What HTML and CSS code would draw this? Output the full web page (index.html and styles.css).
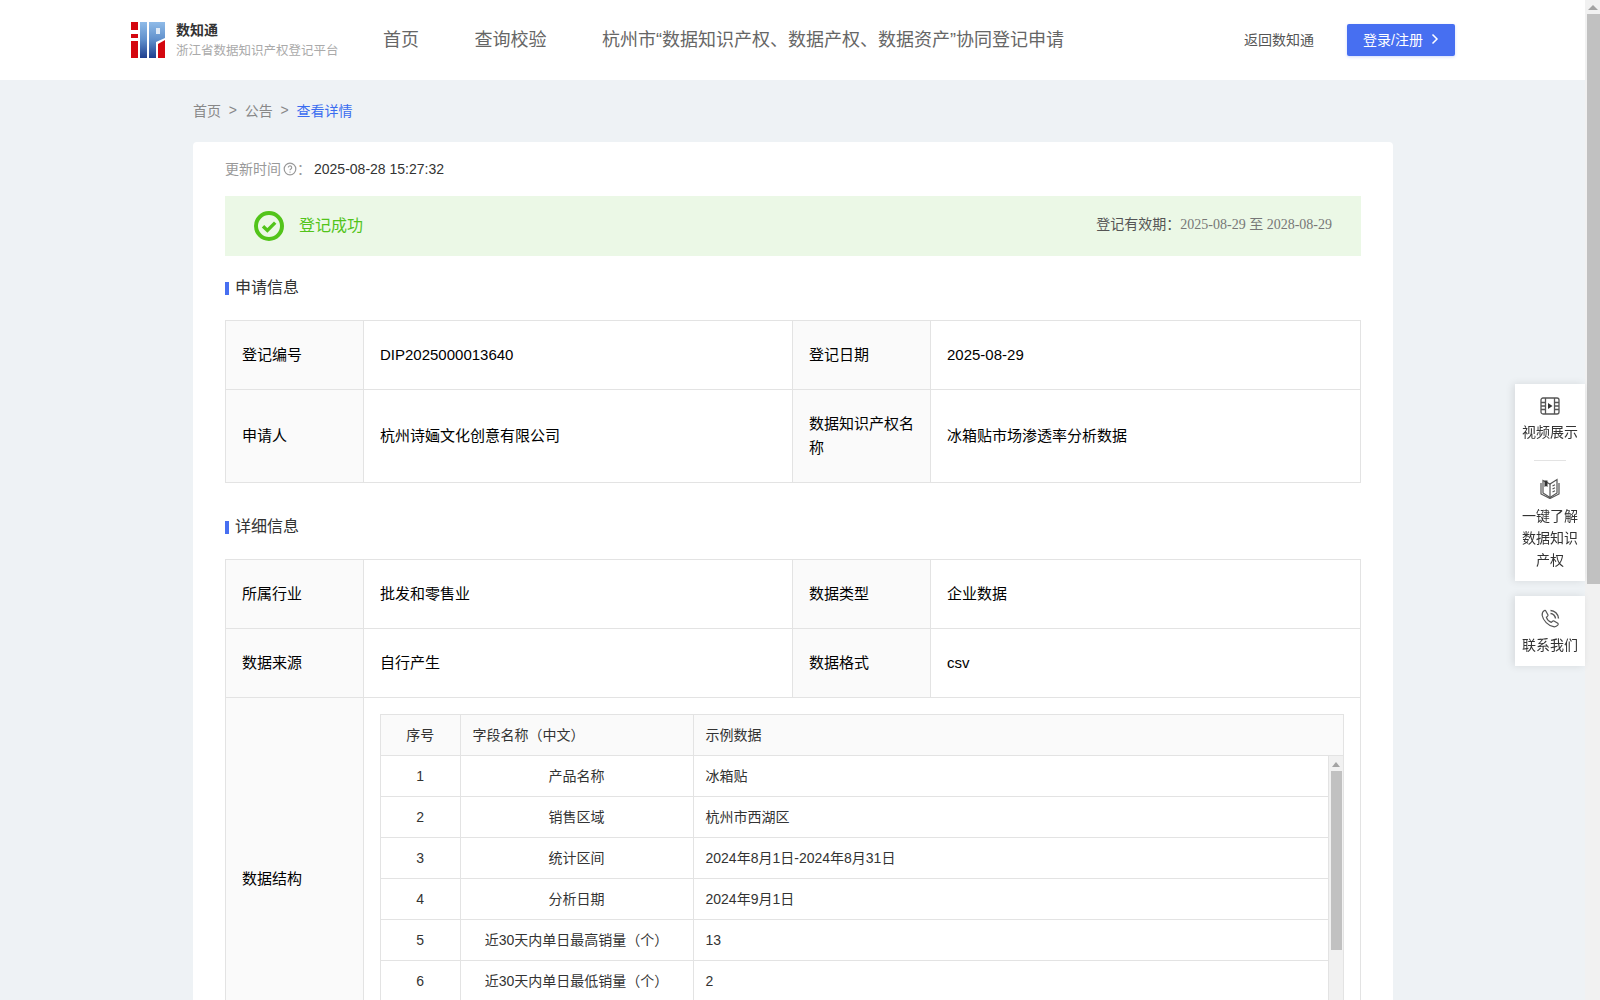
FILE: index.html
```html
<!DOCTYPE html>
<html lang="zh-CN">
<head>
    <meta charset="UTF-8">
    <title>数知通 - 查看详情</title>
    <link rel="stylesheet" href="styles.css">
</head>
<body>
<div class="page">
    <header class="header">
        <div class="brand">
            <svg class="logo" width="34" height="36" viewBox="0 0 34 36">
                <defs>
                    <linearGradient id="logoBlue" x1="0" y1="0" x2="0" y2="1">
                        <stop offset="0" stop-color="#8fbbe8"/>
                        <stop offset="0.5" stop-color="#5f8fcb"/>
                        <stop offset="1" stop-color="#1f3f8f"/>
                    </linearGradient>
                </defs>
                <rect x="0" y="0" width="7" height="8" fill="#d4070f"/>
                <rect x="0" y="12" width="7" height="4" fill="#d4070f"/>
                <rect x="0" y="19" width="7" height="17" fill="#d4070f"/>
                <rect x="9" y="0" width="7" height="36" fill="url(#logoBlue)"/>
                <path d="M18 0H34V16L25 20V36H18Z" fill="url(#logoBlue)"/>
                <rect x="25" y="6" width="4" height="6" fill="#dfeaf7"/>
                <path d="M27 22L34 18V36H27Z" fill="#d4070f"/>
            </svg>
            <div class="brand-text">
                <div class="brand-name">数知通</div>
                <div class="brand-sub">浙江省数据知识产权登记平台</div>
            </div>
        </div>
        <nav class="nav">
            <a>首页</a>
            <a>查询校验</a>
            <a>杭州市“数据知识产权、数据产权、数据资产”协同登记申请</a>
        </nav>
        <div class="header-right">
            <a class="back-link">返回数知通</a>
            <button class="login-btn">登录/注册
                <svg width="8" height="12" viewBox="0 0 8 12"><path d="M1.5 1.5L6 6L1.5 10.5" fill="none" stroke="#fff" stroke-width="1.5"/></svg>
            </button>
        </div>
    </header>

    <main class="content">
        <div class="breadcrumb">
            <span>首页</span><i>&gt;</i><span>公告</span><i>&gt;</i><span class="current">查看详情</span>
        </div>

        <section class="card">
            <div class="update-time">
                <span class="update-label">更新时间</span>
                <svg width="14" height="14" viewBox="0 0 14 14" class="help"><circle cx="7" cy="7" r="5.8" fill="none" stroke="#999" stroke-width="1.2"/><path d="M5.3 5.6a1.7 1.7 0 1 1 2.6 1.4c-.6.4-.9.7-.9 1.3" fill="none" stroke="#999" stroke-width="1.1"/><circle cx="7" cy="10.1" r=".7" fill="#999"/></svg>
                <span class="update-label">：</span>
                <span class="update-value">2025-08-28 15:27:32</span>
            </div>

            <div class="status-bar">
                <div class="status-left">
                    <svg width="30" height="30" viewBox="0 0 30 30"><circle cx="15" cy="15" r="13" fill="none" stroke="#52c41a" stroke-width="4"/><path d="M9 15.2L13.4 19.4L21.2 11.6" fill="none" stroke="#52c41a" stroke-width="3.4"/></svg>
                    <span>登记成功</span>
                </div>
                <div class="status-right">登记有效期：<span class="dates">2025-08-29 至 2028-08-29</span></div>
            </div>

            <h3 class="section-title">申请信息</h3>
            <table class="info-table">
                <colgroup><col class="col-label"><col class="col-value"><col class="col-label"><col></colgroup>
                <tr>
                    <th>登记编号</th><td>DIP2025000013640</td>
                    <th>登记日期</th><td>2025-08-29</td>
                </tr>
                <tr class="tall">
                    <th>申请人</th><td>杭州诗婳文化创意有限公司</td>
                    <th>数据知识产权名称</th><td>冰箱贴市场渗透率分析数据</td>
                </tr>
            </table>

            <h3 class="section-title second">详细信息</h3>
            <table class="info-table">
                <colgroup><col class="col-label"><col class="col-value"><col class="col-label"><col></colgroup>
                <tr>
                    <th>所属行业</th><td>批发和零售业</td>
                    <th>数据类型</th><td>企业数据</td>
                </tr>
                <tr>
                    <th>数据来源</th><td>自行产生</td>
                    <th>数据格式</th><td>csv</td>
                </tr>
                <tr>
                    <th>数据结构</th>
                    <td colspan="3" class="structure-cell">
                        <div class="structure">
                            <table class="structure-table">
                                <colgroup><col class="col-no"><col class="col-field"><col></colgroup>
                                <tr class="head"><td>序号</td><td class="left">字段名称（中文）</td><td class="left">示例数据</td></tr>
                            </table>
                            <div class="structure-body">
                                <table class="structure-table">
                                    <colgroup><col class="col-no"><col class="col-field"><col></colgroup>
                                    <tr><td>1</td><td>产品名称</td><td class="left">冰箱贴</td></tr>
                                    <tr><td>2</td><td>销售区域</td><td class="left">杭州市西湖区</td></tr>
                                    <tr><td>3</td><td>统计区间</td><td class="left">2024年8月1日-2024年8月31日</td></tr>
                                    <tr><td>4</td><td>分析日期</td><td class="left">2024年9月1日</td></tr>
                                    <tr><td>5</td><td>近30天内单日最高销量（个）</td><td class="left">13</td></tr>
                                    <tr><td>6</td><td>近30天内单日最低销量（个）</td><td class="left">2</td></tr>
                                </table>
                                <div class="inner-scroll">
                                    <div class="arrow-up"></div>
                                    <div class="inner-thumb"></div>
                                </div>
                            </div>
                        </div>
                    </td>
                </tr>
            </table>
        </section>
    </main>

    <aside class="side-tools">
        <div class="tool-card">
            <div class="tool">
                <svg width="20" height="18" viewBox="0 0 20 18" fill="none" stroke="#555" stroke-width="1.3"><rect x="1" y="1" width="18" height="16" rx="2"/><path d="M5.5 1V17M14.5 1V17M1 5.5H5.5M1 9H5.5M1 12.5H5.5M14.5 5.5H19M14.5 9H19M14.5 12.5H19"/><path d="M8 6L12.5 9L8 12Z" fill="#333" stroke="none"/></svg>
                <span>视频展示</span>
            </div>
            <div class="tool-line"></div>
            <div class="tool">
                <svg width="20" height="21" viewBox="0 0 20 21" fill="none" stroke="#555" stroke-width="1.2"><path d="M3 2.5L10 6L17 1.5V15L10 19.5L3 15Z"/><path d="M1 5V16L10 20.5L19 16V5"/><path d="M10 6V19.5"/><path d="M12.5 8L15 6.8M12.5 11L15 9.8M12.5 14L15 12.8"/><path d="M4.5 2.5H7.5V9L6 8L4.5 9Z" fill="#333" stroke="none"/></svg>
                <span>一键了解<br>数据知识<br>产权</span>
            </div>
        </div>
        <div class="tool-card">
            <div class="tool">
                <svg width="19" height="19" viewBox="0 0 19 19" fill="none" stroke="#555" stroke-width="1.2"><path d="M4.5 1.5L7 6C7.2 6.6 6.9 7 6.4 7.4L5.4 8.3C6 10.3 8 12.5 10.3 13.4L11.5 12.3C12 11.9 12.5 11.8 13 12.1L16.8 14.3C17.4 14.8 17.3 15.6 16.8 16.2C15.7 17.4 14.2 18 12.6 17.7C7 16.7 2.2 11.6 1.2 6.5C.9 4.6 2 2.4 3.4 1.5C3.8 1.2 4.2 1.2 4.5 1.5Z"/><path d="M9.5 1.5C13.5 1.5 17.3 5 17.5 9.5" stroke-width="1.4"/><path d="M9.5 4.5C12 4.5 14.3 6.8 14.5 9.5" stroke-width="1.4"/></svg>
                <span>联系我们</span>
            </div>
        </div>
    </aside>
</div>
<div class="page-scroll">
    <div class="page-arrow"></div>
    <div class="page-thumb"></div>
</div>
</body>
</html>
```

FILE: styles.css
```css
* {
    box-sizing: border-box;
}

html, body {
    height: 100%;
    margin: 0;
    overflow: hidden;
}

body {
    display: flex;
    font-family: "Liberation Sans", "Noto Sans CJK SC", sans-serif;
    font-size: 14px;
    color: #333;
    background-color: #eef2f5;
}

.page {
    flex: 1;
    min-width: 0;
    height: 100vh;
    overflow: hidden;
}

/* header */
.header {
    display: flex;
    align-items: center;
    height: 80px;
    padding: 0 130px 0 131px;
    background-color: #fff;
}

.brand {
    display: flex;
    align-items: center;
    gap: 11px;
    width: 252px;
}

.brand-name {
    font-size: 14px;
    font-weight: bold;
    line-height: 18px;
    color: #333;
}

.brand-sub {
    margin-top: 3px;
    font-size: 12.5px;
    line-height: 18px;
    white-space: nowrap;
    color: #aaa;
}

.nav {
    display: flex;
    gap: 55.5px;
    padding-bottom: 4px;
    font-size: 18px;
    color: #666;
}

.header-right {
    display: flex;
    align-items: center;
    gap: 33px;
    margin-left: auto;
}

.back-link {
    padding-bottom: 3px;
    color: #555;
}

.login-btn {
    display: flex;
    align-items: center;
    gap: 8px;
    width: 108px;
    height: 32px;
    padding: 0 0 3px 16px;
    border: 0;
    border-radius: 2px;
    font: inherit;
    color: #fff;
    background-color: #476ff1;
    box-shadow: 0 1px 3px rgba(71, 111, 241, 0.25);
}

/* content */
.content {
    width: 1200px;
    margin-left: 193px;
}

.breadcrumb {
    display: flex;
    align-items: center;
    height: 59px;
    margin-bottom: 3px;
    color: #888;
}

.breadcrumb i {
    margin: 0 7.8px;
    font-style: normal;
}

.current {
    color: #3a6df0;
}

.card {
    padding: 16px 32px;
    border-radius: 4px;
    background-color: #fff;
}

.update-time {
    display: flex;
    align-items: center;
    height: 21px;
}

.update-label {
    margin-bottom: 2px;
    color: #999;
}

.help {
    margin-left: 2px;
}

.update-value {
    margin-left: 3px;
    color: #333;
}

.status-bar {
    display: flex;
    align-items: center;
    justify-content: space-between;
    height: 60px;
    margin-top: 17px;
    padding: 0 29px;
    background-color: #ebf8e6;
}

.status-left {
    display: flex;
    align-items: center;
    gap: 15px;
    font-size: 16px;
    color: #52c41a;
}

.status-left span {
    margin-bottom: 4px;
}

.status-right {
    margin-bottom: 6px;
    color: #555;
}

.dates {
    font-family: "Liberation Serif", "Noto Sans CJK SC", serif;
    font-size: 14px;
    color: #777;
}

.section-title {
    position: relative;
    height: 22px;
    margin: 21px 0 21px;
    padding-left: 10px;
    font-size: 16px;
    font-weight: normal;
    line-height: 22px;
    color: #333;
}

.section-title::before {
    content: "";
    position: absolute;
    left: 0;
    top: 5px;
    width: 4px;
    height: 13px;
    background-color: #476ff1;
}

.section-title.second {
    margin-top: 33px;
}

/* tables */
.info-table {
    width: 100%;
    border-collapse: collapse;
    table-layout: fixed;
    font-size: 15px;
    color: #000;
}

.col-label {
    width: 138px;
}

.col-value {
    width: 429px;
}

.info-table th,
.info-table td {
    height: 69px;
    padding: 0 16px;
    border: 1px solid #e3e3e3;
    font-weight: normal;
    line-height: 24px;
    text-align: left;
}

.info-table th {
    background-color: #fafafa;
}

.info-table .tall th,
.info-table .tall td {
    height: 93px;
}

.info-table .structure-cell {
    padding: 16px;
    vertical-align: top;
}

.structure {
    border: 1px solid #e3e3e3;
    border-bottom: 0;
}

.structure-table {
    width: 100%;
    border-collapse: collapse;
    table-layout: fixed;
    font-size: 14px;
    color: #333;
}

.col-no {
    width: 79px;
}

.col-field {
    width: 233px;
}

.info-table .structure-table td {
    height: 41px;
    padding: 0 12px;
    border: 0;
    border-right: 1px solid #e3e3e3;
    border-bottom: 1px solid #e3e3e3;
    text-align: center;
}

.info-table .structure-table td:last-child {
    border-right: 0;
}

.info-table .structure-table td.left {
    text-align: left;
}

.info-table .structure-table .head td {
    height: 40px;
    background-color: #fafafa;
}

.structure-body {
    display: flex;
    align-items: flex-start;
    height: 288px;
    overflow: hidden;
}

.structure-body .structure-table {
    flex: 1;
    min-width: 0;
}

.inner-scroll {
    flex: none;
    align-self: stretch;
    width: 15px;
    border-left: 1px solid #e3e3e3;
    background-color: #f1f1f1;
}

.arrow-up {
    width: 0;
    margin: 6px auto 4px;
    border: 4px solid transparent;
    border-top: 0;
    border-bottom: 5px solid #a3a3a3;
}

.inner-thumb {
    width: 11px;
    height: 179px;
    margin: 0 auto;
    background-color: #c1c1c1;
}

/* side tools */
.side-tools {
    position: fixed;
    top: 384px;
    right: 15px;
    display: flex;
    flex-direction: column;
    gap: 15px;
    width: 70px;
}

.tool-card {
    padding: 13px 0 10px;
    background-color: #fff;
    box-shadow: -2px 0 8px rgba(0, 0, 0, 0.1);
    text-align: center;
}

.tool {
    display: flex;
    flex-direction: column;
    align-items: center;
    gap: 6px;
    line-height: 22px;
    color: #333;
}

.tool-line {
    width: 32px;
    height: 1px;
    margin: 17px auto 17px;
    background-color: #e3e3e3;
}

/* page scrollbar */
.page-scroll {
    flex: none;
    width: 15px;
    height: 100vh;
    background-color: #f1f1f1;
}

.page-arrow {
    width: 0;
    margin: 5px auto 4px;
    border: 5px solid transparent;
    border-top: 0;
    border-bottom: 5px solid #a3a3a3;
}

.page-thumb {
    width: 13px;
    height: 570px;
    margin-left: 2px;
    background-color: #c1c1c1;
}
```
